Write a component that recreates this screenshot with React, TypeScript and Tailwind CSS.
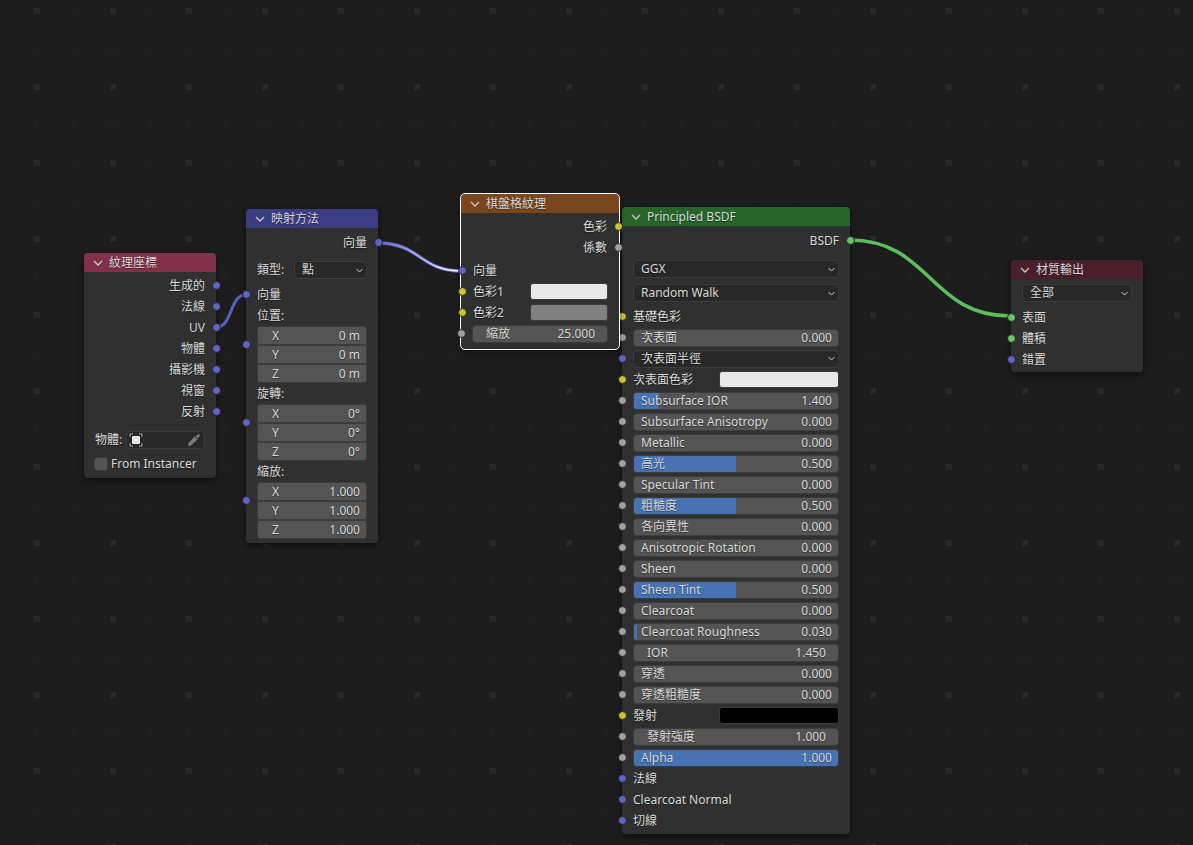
import type { ReactNode } from 'react'

const PURPLE = 'bg-[#6363c7]'
const YELLOW = 'bg-[#c7c729]'
const GREY = 'bg-[#a1a1a1]'
const GREEN = 'bg-[#63c763]'

function Chevron({ className }: { className: string }) {
  return (
    <svg viewBox="0 0 12 12" className={className} fill="none" stroke="currentColor" strokeWidth="1.3">
      <path d="M2 4 L6 8 L10 4" />
    </svg>
  )
}

function Socket({ color, side, className = 'top-1/2' }: { color: string; side: 'left' | 'right'; className?: string }) {
  return (
    <span
      className={`absolute z-10 w-[9px] h-[9px] -mt-[4.5px] rounded-full border border-[#222] ${color} ${className} ${
        side === 'left' ? '-left-[15.5px]' : '-right-[15.5px]'
      }`}
    />
  )
}

function Row({ children, color, right }: { children: ReactNode; color?: string; right?: boolean }) {
  return (
    <div className={`relative h-[21px] flex items-center ${right ? 'justify-end' : ''}`}>
      {color && <Socket color={color} side={right ? 'right' : 'left'} />}
      {children}
    </div>
  )
}

function Slider({ label, value, color, fill, indent }: { label: string; value: string; color?: string; fill?: string; indent?: boolean }) {
  return (
    <div className="relative h-[21px] flex items-center">
      {color && <Socket color={color} side="left" />}
      <div className="relative flex-1 h-[18px] rounded-[4px] border-[1.5px] border-[#3c3c3c] bg-[#545454] overflow-hidden">
        {fill && <div className={`absolute inset-y-0 left-0 bg-[#4772b3] ${fill}`} />}
        <div className={`relative h-full flex items-center justify-between ${indent ? 'pl-[13px] pr-[12px]' : 'pl-[7px] pr-[6px]'}`}>
          <span>{label}</span>
          <span>{value}</span>
        </div>
      </div>
    </div>
  )
}

function Dropdown({ label, className = 'flex-1' }: { label: string; className?: string }) {
  return (
    <div className={`h-[18px] rounded-[4px] border-[1.5px] border-[#3c3c3c] bg-[#282828] flex items-center justify-between pl-[7px] pr-[2px] ${className}`}>
      <span>{label}</span>
      <Chevron className="w-[9px] h-[9px] text-[#d8d8d8]" />
    </div>
  )
}

function Swatch({ label, color, socket, className }: { label: string; color: string; socket: string; className: string }) {
  return (
    <Row color={socket}>
      <span className="flex-1">{label}</span>
      <div className={`h-[17px] rounded-[3px] border border-[#3c3c3c] ${color} ${className}`} />
    </Row>
  )
}

function VectorGroup({ title, rows }: { title: string; rows: [string, string][] }) {
  return (
    <div className="relative">
      <div className="h-[21px] flex items-center">{title}</div>
      <Socket color={PURPLE} side="left" className="top-[39px]" />
      <div className="rounded-[4px] bg-[#3c3c3c] p-[1px] flex flex-col gap-[2px]">
        {rows.map(([axis, value]) => (
          <div key={axis} className="h-[17px] rounded-[2px] bg-[#545454] flex items-center justify-between pl-[14px] pr-[6px]">
            <span>{axis}</span>
            <span>{value}</span>
          </div>
        ))}
      </div>
    </div>
  )
}

function Node({
  title,
  header,
  className,
  selected,
  children,
}: {
  title: string
  header: string
  className: string
  selected?: boolean
  children: ReactNode
}) {
  return (
    <div className={`absolute rounded-[4px] bg-[#303030] shadow-[0_2px_6px_rgba(0,0,0,0.55)] ${selected ? 'outline outline-1 outline-white' : ''} ${className}`}>
      <div className={`h-[19px] rounded-t-[4px] flex items-center pl-[8px] gap-[5px] ${header}`}>
        <Chevron className="w-[12px] h-[12px] text-[#c9c9c9]" />
        <span>{title}</span>
      </div>
      {children}
    </div>
  )
}

function TexCoordNode() {
  const outs = ['生成的', '法線', 'UV', '物體', '攝影機', '視窗', '反射']
  return (
    <Node title="紋理座標" header="bg-[#83314a]" className="left-[84px] top-[253px] w-[132px] h-[225px]">
      <div className="px-[11px] pt-[3px]">
        {outs.map(o => (
          <Row key={o} color={PURPLE} right>
            {o}
          </Row>
        ))}
        <div className="mt-[8px] h-[20px] flex items-center gap-[4px]">
          <span>物體:</span>
          <div className="relative flex-1 h-[18px] rounded-[4px] border-[1.5px] border-[#3c3c3c] bg-[#282828]">
            <svg viewBox="0 0 14 14" className="absolute left-[2px] top-[1px] w-[14px] h-[14px]" fill="none">
              <rect x="3" y="3" width="8" height="8" rx="1" fill="#e6e6e6" />
              <path d="M1 4V1H4M10 1H13V4M13 10V13H10M4 13H1V10" stroke="#c4c4c4" strokeWidth="0.8" />
            </svg>
            <svg viewBox="0 0 14 14" className="absolute right-[3px] top-[1px] w-[14px] h-[14px]" fill="#7c7c7c">
              <path d="M8.5 3.5 L10.5 1.5 Q11.5 0.8 12.6 1.6 Q13.2 2.6 12.4 3.6 L10.5 5.5 Z" />
              <path d="M7.6 3.6 L10.4 6.4 L4 12.6 L1.6 13 L1.4 10.2 Z" />
            </svg>
          </div>
        </div>
        <div className="mt-[4px] h-[20px] flex items-center gap-[3px] -ml-px">
          <span className="w-[14px] h-[14px] rounded-[3px] bg-[#545454] border border-[#3c3c3c]" />
          <span>From Instancer</span>
        </div>
      </div>
    </Node>
  )
}

function MappingNode() {
  return (
    <Node title="映射方法" header="bg-[#3c3c83]" className="left-[246px] top-[209px] w-[132px] h-[334px]">
      <div className="px-[11px] pt-[4px]">
        <Row color={PURPLE} right>
          向量
        </Row>
        <div className="mt-[5px] h-[24px] flex items-center gap-[4px]">
          <span className="w-[33px]">類型:</span>
          <Dropdown label="點" />
        </div>
        <div className="mt-[2px]">
          <Row color={PURPLE}>向量</Row>
        </div>
        <VectorGroup title="位置:" rows={[['X', '0 m'], ['Y', '0 m'], ['Z', '0 m']]} />
        <VectorGroup title="旋轉:" rows={[['X', '0°'], ['Y', '0°'], ['Z', '0°']]} />
        <VectorGroup title="縮放:" rows={[['X', '1.000'], ['Y', '1.000'], ['Z', '1.000']]} />
      </div>
    </Node>
  )
}

function CheckerNode() {
  return (
    <Node title="棋盤格紋理" header="bg-[#79461d]" className="left-[461px] top-[194px] w-[158px] h-[155px] z-20" selected>
      <div className="px-[12px] pt-[3px]">
        <Row color={YELLOW} right>
          色彩
        </Row>
        <Row color={GREY} right>
          係數
        </Row>
        <div className="mt-[2px]">
          <Row color={PURPLE}>向量</Row>
        </div>
        <Swatch label="色彩1" color="bg-[#e8e8e8]" socket={YELLOW} className="w-[78px] -mr-[1px]" />
        <Swatch label="色彩2" color="bg-[#808080]" socket={YELLOW} className="w-[78px] -mr-[1px]" />
        <div className="-mx-px">
          <Slider label="縮放" value="25.000" color={GREY} indent />
        </div>
      </div>
    </Node>
  )
}

function BsdfNode() {
  return (
    <Node title="Principled BSDF" header="bg-[#27652b]" className="left-[622px] top-[207px] w-[228px] h-[627px]">
      <div className="px-[11px] pt-[4px]">
        <Row color={GREEN} right>
          BSDF
        </Row>
        <div className="mt-[6px] h-[24px] flex items-center">
          <Dropdown label="GGX" />
        </div>
        <div className="h-[24px] flex items-center">
          <Dropdown label="Random Walk" />
        </div>
        <div className="mt-[1px]">
          <Row color={YELLOW}>基礎色彩</Row>
        </div>
        <Slider label="次表面" value="0.000" color={GREY} />
        <div className="relative h-[21px] flex items-center">
          <Socket color={PURPLE} side="left" />
          <Dropdown label="次表面半徑" />
        </div>
        <Swatch label="次表面色彩" color="bg-[#e8e8e8]" socket={YELLOW} className="w-[120px]" />
        <Slider label="Subsurface IOR" value="1.400" color={GREY} fill="w-[25px]" />
        <Slider label="Subsurface Anisotropy" value="0.000" color={GREY} />
        <Slider label="Metallic" value="0.000" color={GREY} />
        <Slider label="高光" value="0.500" color={GREY} fill="w-1/2" />
        <Slider label="Specular Tint" value="0.000" color={GREY} />
        <Slider label="粗糙度" value="0.500" color={GREY} fill="w-1/2" />
        <Slider label="各向異性" value="0.000" color={GREY} />
        <Slider label="Anisotropic Rotation" value="0.000" color={GREY} />
        <Slider label="Sheen" value="0.000" color={GREY} />
        <Slider label="Sheen Tint" value="0.500" color={GREY} fill="w-1/2" />
        <Slider label="Clearcoat" value="0.000" color={GREY} />
        <Slider label="Clearcoat Roughness" value="0.030" color={GREY} fill="w-[3px]" />
        <Slider label="IOR" value="1.450" color={GREY} indent />
        <Slider label="穿透" value="0.000" color={GREY} />
        <Slider label="穿透粗糙度" value="0.000" color={GREY} />
        <Swatch label="發射" color="bg-[#000000]" socket={YELLOW} className="w-[120px]" />
        <Slider label="發射強度" value="1.000" color={GREY} indent />
        <Slider label="Alpha" value="1.000" color={GREY} fill="w-full" />
        <Row color={PURPLE}>法線</Row>
        <Row color={PURPLE}>Clearcoat Normal</Row>
        <Row color={PURPLE}>切線</Row>
      </div>
    </Node>
  )
}

function OutputNode() {
  return (
    <Node title="材質輸出" header="bg-[#4a1f2c]" className="left-[1011px] top-[260px] w-[132px] h-[112px]">
      <div className="px-[11px]">
        <div className="h-[28px] flex items-center">
          <Dropdown label="全部" />
        </div>
        <Row color={GREEN}>表面</Row>
        <Row color={GREEN}>體積</Row>
        <Row color={PURPLE}>錯置</Row>
      </div>
    </Node>
  )
}

function Wires() {
  return (
    <svg className="absolute inset-0 w-full h-full" fill="none" strokeLinecap="round">
      <defs>
        <linearGradient id="sel" x1="378" y1="0" x2="461" y2="0" gradientUnits="userSpaceOnUse">
          <stop offset="0" stopColor="#6363c7" />
          <stop offset="1" stopColor="#ffffff" />
        </linearGradient>
      </defs>
      <path d="M217 327 C232 327 230 295 245 295" stroke="#1d1d1d" strokeWidth="4.5" />
      <path d="M217 327 C232 327 230 295 245 295" stroke="#5c5cc0" strokeWidth="3" />
      <path d="M378 243 C420 243 420 271 461 271" stroke="#1d1d1d" strokeWidth="4.5" />
      <path d="M378 243 C420 243 420 271 461 271" stroke="#6363c7" strokeWidth="3.5" />
      <path d="M378 243 C420 243 420 271 461 271" stroke="url(#sel)" strokeWidth="1.8" />
      <path d="M850 240 C930 240 930 316 1010 316" stroke="#1d1d1d" strokeWidth="5" />
      <path d="M850 240 C930 240 930 316 1010 316" stroke="#5cbe5c" strokeWidth="3.5" />
    </svg>
  )
}

function Grid() {
  return (
    <svg className="absolute inset-0 w-full h-full">
      <defs>
        <pattern id="dots" x="-2" y="11" width="76" height="76" patternUnits="userSpaceOnUse">
          <rect x="36" y="-3" width="6" height="6" fill="#282828" />
          <rect x="36" y="73" width="6" height="6" fill="#282828" />
          <rect x="-2" y="-2" width="4" height="4" fill="#212121" />
          <rect x="74" y="-2" width="4" height="4" fill="#212121" />
          <rect x="-2" y="36" width="4" height="4" fill="#202020" />
          <rect x="74" y="36" width="4" height="4" fill="#202020" />
          <rect x="36" y="36" width="4" height="4" fill="#202020" />
        </pattern>
      </defs>
      <rect width="100%" height="100%" fill="url(#dots)" />
    </svg>
  )
}

export default function App() {
  return (
    <div className="relative w-full h-[845px] overflow-hidden bg-[#1d1d1d] text-[12px] leading-none text-[#d9d9d9] [text-shadow:0_1px_1px_rgba(0,0,0,0.45)] font-['Noto_Sans','Noto_Sans_CJK_TC',sans-serif]">
      <Grid />
      <Wires />
      <TexCoordNode />
      <MappingNode />
      <BsdfNode />
      <CheckerNode />
      <OutputNode />
    </div>
  )
}
